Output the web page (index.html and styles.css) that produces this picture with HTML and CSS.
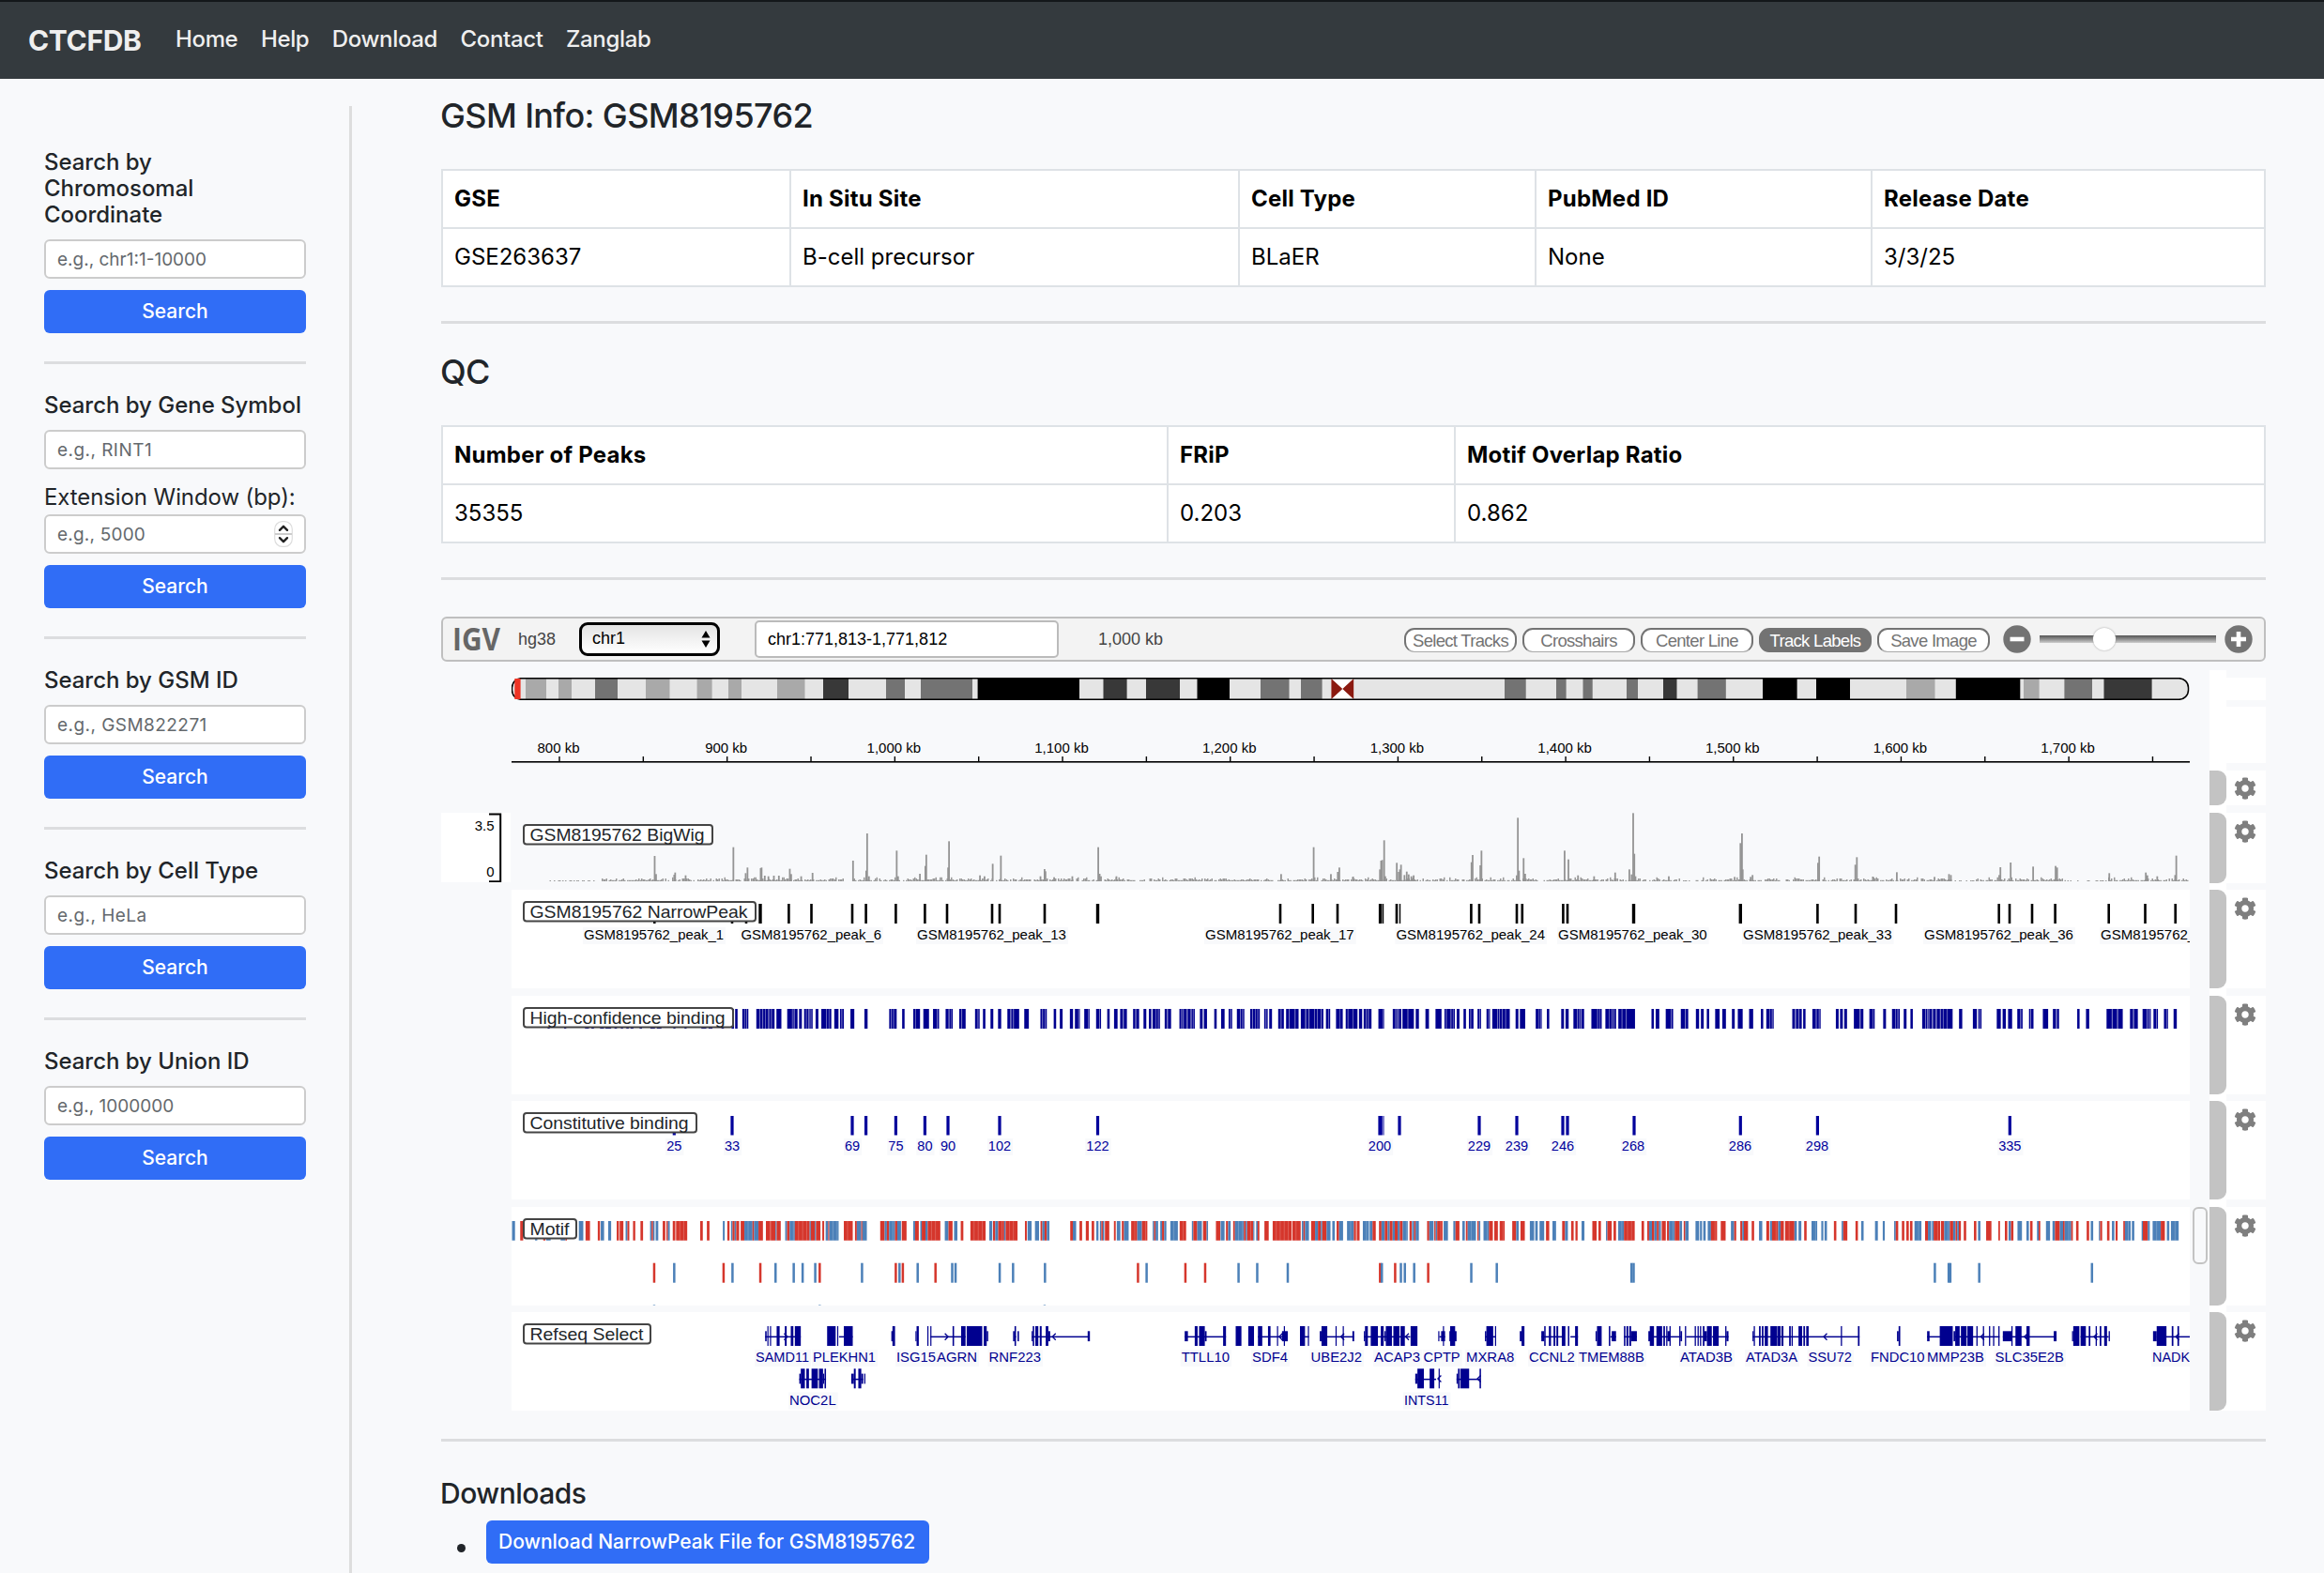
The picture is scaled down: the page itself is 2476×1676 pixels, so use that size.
FILE: index.html
```html
<!DOCTYPE html>
<html lang="en">
<head>
<meta charset="utf-8">
<title>CTCFDB - GSM8195762</title>
<link rel="stylesheet" href="styles.css">
</head>
<body>
<svg class="defs" aria-hidden="true">
  <symbol id="cog" viewBox="0 0 512 512"><path d="M487.4 315.7l-42.6-24.6c4.3-23.2 4.3-47 0-70.2l42.6-24.6c4.9-2.8 7.1-8.6 5.5-14-11.1-35.6-30-67.8-54.7-94.6-3.8-4.1-10-5.1-14.8-2.3L380.8 110c-17.9-15.4-38.5-27.3-60.8-35.1V25.8c0-5.6-3.9-10.5-9.4-11.7-36.7-8.2-74.3-7.8-109.2 0-5.5 1.2-9.4 6.1-9.4 11.7V75c-22.2 7.9-42.8 19.8-60.8 35.1L88.7 85.5c-4.9-2.8-11-1.9-14.8 2.3-24.7 26.7-43.6 58.9-54.7 94.6-1.7 5.4.6 11.2 5.5 14L67.3 221c-4.3 23.2-4.3 47 0 70.2l-42.6 24.6c-4.9 2.8-7.1 8.6-5.5 14 11.1 35.6 30 67.8 54.7 94.6 3.8 4.1 10 5.1 14.8 2.3l42.6-24.6c17.9 15.4 38.5 27.3 60.8 35.1v49.2c0 5.6 3.9 10.5 9.4 11.7 36.7 8.2 74.3 7.8 109.2 0 5.5-1.2 9.4-6.1 9.4-11.7v-49.2c22.2-7.9 42.8-19.8 60.8-35.1l42.6 24.6c4.9 2.8 11 1.9 14.8-2.3 24.7-26.7 43.6-58.9 54.7-94.6 1.5-5.5-.7-11.3-5.6-14.1zM256 336c-44.1 0-80-35.9-80-80s35.9-80 80-80 80 35.9 80 80-35.9 80-80 80z"/></symbol>
</svg>
<nav class="navbar">
  <a class="brand">CTCFDB</a>
  <a>Home</a><a>Help</a><a>Download</a><a>Contact</a><a>Zanglab</a>
</nav>
<div class="page">
  <aside class="sidebar">
    <form>
      <h5>Search by<br>Chromosomal<br>Coordinate</h5>
      <input type="text" class="tight" placeholder="e.g., chr1:1-10000">
      <button type="button" class="btn">Search</button>
    </form>
    <hr>
    <form>
      <h5>Search by Gene Symbol</h5>
      <input type="text" placeholder="e.g., RINT1">
      <label class="ext">Extension Window (bp):</label>
      <div class="number">
        <input type="text" class="snug" placeholder="e.g., 5000">
        <svg class="spinner" viewBox="0 0 20 28"><rect class="case" x=".7" y=".7" width="18.6" height="26.6" rx="8"/><path class="split" d="M1 14H19"/><path class="chev" d="M6 9.8 10 5.8l4 4M6 18.2l4 4 4-4"/></svg>
      </div>
      <button type="button" class="btn">Search</button>
    </form>
    <hr>
    <form>
      <h5>Search by GSM ID</h5>
      <input type="text" placeholder="e.g., GSM822271">
      <button type="button" class="btn">Search</button>
    </form>
    <hr>
    <form>
      <h5>Search by Cell Type</h5>
      <input type="text" placeholder="e.g., HeLa">
      <button type="button" class="btn">Search</button>
    </form>
    <hr>
    <form>
      <h5>Search by Union ID</h5>
      <input type="text" class="tight" placeholder="e.g., 1000000">
      <button type="button" class="btn">Search</button>
    </form>
  </aside>
  <main class="content">
    <h2>GSM Info: GSM8195762</h2>
    <table class="info">
      <colgroup><col class="c1"><col class="c2"><col class="c3"><col class="c4"><col></colgroup>
      <tr><th>GSE</th><th>In Situ Site</th><th>Cell Type</th><th>PubMed ID</th><th>Release Date</th></tr>
      <tr><td>GSE263637</td><td>B-cell precursor</td><td>BLaER</td><td>None</td><td>3/3/25</td></tr>
    </table>
    <hr>
    <h2>QC</h2>
    <table class="qc">
      <colgroup><col class="q1"><col class="q2"><col></colgroup>
      <tr><th>Number of Peaks</th><th>FRiP</th><th>Motif Overlap Ratio</th></tr>
      <tr><td>35355</td><td>0.203</td><td>0.862</td></tr>
    </table>
    <hr>
    <section class="igv">
      <div class="igv-bar">
        <svg class="logo" viewBox="0 0 52 26"><text x="0" y="25" textLength="51" lengthAdjust="spacingAndGlyphs">IGV</text></svg>
        <span class="genome">hg38</span>
        <span class="chrom">chr1<svg viewBox="0 0 10 18"><path d="M5 0 9.5 7.5H.5zM5 18 .5 10.5h9z"/></svg></span>
        <span class="locus">chr1:771,813-1,771,812</span>
        <span class="span">1,000 kb</span>
        <div class="toggles">
          <span>Select Tracks</span><span>Crosshairs</span><span>Center Line</span><span class="on">Track Labels</span><span>Save Image</span>
        </div>
        <svg class="zoom" viewBox="0 0 30 30"><circle cx="15" cy="15" r="14.7"/><path d="M7.5 15h15"/></svg>
        <div class="slider"><i></i></div>
        <svg class="zoom" viewBox="0 0 30 30"><circle cx="15" cy="15" r="14.7"/><path d="M7 15h16M15 7v16"/></svg>
      </div>
      <div class="tracks">
        <div class="row ideo"><div class="axis"></div><svg id="ideogram" class="view clear" viewBox="545 722 1788 24"></svg><div class="handle"></div><div class="gear"></div></div>
        <div class="row ruler"><div class="axis"></div><svg id="ruler" class="view clear" viewBox="545 753 1788 60"></svg><div class="handle"></div><div class="gear"></div></div>
        <div class="row seq"><div class="axis"></div><div class="view clear"></div><div class="handle grip"></div><div class="gear"><svg><use href="#cog"/></svg></div></div>
        <div class="row wig"><div class="axis"><svg class="scale" viewBox="470 866 74 74"><path d="M521 867.5H533.2V939.2H521"/><text x="526.5" y="885">3.5</text><text x="526.5" y="934">0</text></svg></div><svg id="bigwig" class="view clear" viewBox="545 866 1788 75"></svg><div class="handle grip"></div><div class="gear"><svg><use href="#cog"/></svg></div></div>
        <div class="row tall"><div class="axis"></div><svg id="peaks" class="view" viewBox="545 948 1788 105"></svg><div class="handle grip"></div><div class="gear"><svg><use href="#cog"/></svg></div></div>
        <div class="row tall"><div class="axis"></div><svg id="highconf" class="view" viewBox="545 1061 1788 105"></svg><div class="handle grip"></div><div class="gear"><svg><use href="#cog"/></svg></div></div>
        <div class="row tall"><div class="axis"></div><svg id="constit" class="view" viewBox="545 1173 1788 105"></svg><div class="handle grip"></div><div class="gear"><svg><use href="#cog"/></svg></div></div>
        <div class="row tall"><div class="axis"></div><svg id="motif" class="view" viewBox="545 1286 1788 105"></svg><div class="scroll"></div><div class="handle grip"></div><div class="gear"><svg><use href="#cog"/></svg></div></div>
        <div class="row tall"><div class="axis"></div><svg id="refseq" class="view" viewBox="545 1398 1788 105"></svg><div class="handle grip"></div><div class="gear"><svg><use href="#cog"/></svg></div></div>
      </div>
    </section>
    <hr class="last">
    <h4>Downloads</h4>
    <ul><li><a class="btn download">Download NarrowPeak File for GSM8195762</a></li></ul>
  </main>
</div>
<script src="tracks.js"></script>
</body>
</html>
```
FILE: styles.css
```css
* { box-sizing: border-box; }
html, body { margin: 0; height: 1676px; overflow: hidden; }
body { background: #f8f9fb; color: #212529; font: 400 24px/36px Inter, "Liberation Sans", sans-serif; }
.defs { display: none; }

.navbar { height: 84px; background: #343a3e; border-top: 2px solid #13171a; display: flex; align-items: center; padding: 0 0 3px 30px; gap: 24.5px; color: #efefef; font-weight: 500; letter-spacing: -.35px; }
.navbar .brand { font-size: 30px; font-weight: 700; margin-right: 12px; padding-top: 2px; letter-spacing: -0.35px; }

.page { display: flex; height: 1592px; }
.sidebar { width: 328px; margin: 29px 0 0 47px; padding: 46px 46px 0 0; border-right: 3px solid #ddd; }
form { display: flex; flex-direction: column; gap: 12px; }
h5 { margin: 0; font-size: 24px; line-height: 28px; font-weight: 500; white-space: nowrap; letter-spacing: -.03px; }
input { height: 42px; width: 100%; border: 2px solid #ccc; border-radius: 6px; background: #fff; padding: 0 12px; font: 400 19px Inter, sans-serif; letter-spacing: .45px; }
input.snug { letter-spacing: .2px; }
input.tight { letter-spacing: 0; }
input::placeholder { color: #64696d; opacity: 1; }
.ext { height: 36px; margin-bottom: -12px; white-space: nowrap; letter-spacing: -.1px; }
.number { position: relative; height: 42px; }
.spinner { position: absolute; right: 14px; top: 7px; width: 20px; height: 28px; fill: none; }
.spinner .case { fill: #fff; stroke: #ddd; stroke-width: 1.2; }
.spinner .split { stroke: #ccc; stroke-width: 2; }
.spinner .chev { stroke: #222; stroke-width: 2.4; stroke-linecap: round; stroke-linejoin: round; }
.btn { height: 46px; border: 0; border-radius: 6px; background: #306df6; color: #fff; font: 500 21px/46px Inter, sans-serif; padding: 0; }
hr { height: 3px; border: 0; margin: 30px 0; background: #dcdddf; }

.content { width: 1944px; margin-left: 95px; padding-top: 18px; }
h2 { margin: 0 0 0 -1px; font-size: 36px; line-height: 42px; font-weight: 500; letter-spacing: -.62px; }
.content > hr { margin: 36px 0 30px; }
table { width: 100%; margin-top: 36px; border-collapse: collapse; table-layout: fixed; background: #fff; color: #000; }
th, td { height: 62px; border: 2px solid #dee2e6; padding: 0 12px; text-align: left; line-height: 36px; }
th { font-weight: 700; letter-spacing: .22px; }
.c1 { width: 371px; } .c2 { width: 478px; } .c3 { width: 316px; } .c4 { width: 358px; }
.q1 { width: 773px; } .q2 { width: 306px; }

.igv { margin-top: 39px; font-family: "Liberation Sans", Arial, sans-serif; }
.igv-bar { height: 48px; border: 2px solid #bfbfbf; border-radius: 6px; background: #f3f3f3; display: flex; align-items: center; padding: 0 12px; color: #444; font-size: 18px; line-height: 20px; }
.logo { width: 52px; height: 26px; margin-left: -2px; }
.logo text { font: 700 34px "Open Sans", sans-serif; fill: #666; }
.genome { width: 41px; margin-left: 18px; }
.chrom { display: flex; justify-content: space-between; align-items: center; width: 150px; height: 36px; margin-left: 24px; border: 3px solid #000; border-radius: 9px; padding: 0 7px 2px 11px; color: #000; background: linear-gradient(#e4e4e4, #fff); }
.chrom svg { width: 10px; height: 18px; margin-top: 2px; }
.locus { width: 324px; height: 40px; margin-left: 37px; border: 2px solid #bbb; border-radius: 5px; background: #fff; color: #000; line-height: 37px; padding-left: 12px; }
.span { width: 80px; margin-left: 42px; }
.toggles { display: flex; gap: 6px; margin-left: auto; padding-top: 1px; }
.toggles span { width: 120px; height: 26px; border: 2px solid #737373; border-bottom: 1px solid #aaa; border-radius: 11px; background: #fff; color: #737373; text-align: center; font-size: 18.5px; line-height: 24px; letter-spacing: -.7px; white-space: nowrap; }
.toggles .on { background: #737373; color: #fff; border-color: #737373; }
.zoom { width: 30px; height: 30px; fill: #737373; }
.zoom path { stroke: #fff; stroke-width: 4.6; }
.toggles + .zoom { margin-left: 14px; }
.slider { width: 188px; height: 8px; margin: 0 9px; background: linear-gradient(#555, #888 45%, #ccc); position: relative; }
.slider i { position: absolute; left: 57px; top: -8px; width: 24px; height: 24px; border-radius: 50%; background: #fff; box-shadow: 0 0 2px #999; }

.tracks { display: flex; flex-direction: column; margin-top: 9px; padding-top: 8px; background: linear-gradient(#fff, #fff) 1884px 0 / 18px 100% no-repeat; }
.row { display: grid; grid-template-columns: 75px 1788px 21px 18px 42px; position: relative; }
.row > .view { grid-column: 2; width: 1788px; height: 100%; background: #fff; }
.row > .clear { background: none; }
.row > .handle { grid-column: 4; }
.row > .grip { background: #c3c3c3; border-radius: 0 9px 9px 0; }
.row > .gear { grid-column: 5; background: #fff; padding: 7px 7px 0 8px; }
.gear svg { display: block; width: 24px; height: 24px; fill: #7f7f7f; }
.ideo { height: 24px; margin-bottom: 7px; }
.ruler { height: 60px; margin-bottom: 8px; }
.seq { height: 37px; margin-bottom: 8px; }
.wig { height: 75px; margin-bottom: 7px; }
.tall { height: 105px; margin-bottom: 8px; }
.tall:nth-child(6), .tall:nth-child(8) { margin-bottom: 7px; }
.tall:last-child { margin-bottom: 0; }
.wig .gear, .tall .gear { padding-top: 8px; }
.scale { display: block; width: 74px; height: 74px; background: #fff; }
.scale path { fill: none; stroke: #000; stroke-width: 2; }
.scale text { font-size: 15px; text-anchor: end; }
.scroll { grid-column: 3; width: 16px; height: 61px; margin-left: 3px; border: 2px solid #c3c3c3; border-radius: 6px; }
.view text { font-size: 15px; }
.view .name { font-size: 18.5px; fill: #212529; }

.content > .last { margin: 30px 0; }
h4 { margin: 0 0 0 -1px; font-size: 30px; line-height: 36px; font-weight: 500; padding-top: 7px; letter-spacing: -.5px; }
ul { margin: 11px 0 0; padding-left: 48px; }
li { height: 46px; position: relative; list-style: none; }
li::before { content: ""; position: absolute; left: -31px; top: 25px; width: 9px; height: 9px; border-radius: 50%; background: #212529; }
.download { display: inline-block; width: 472px; padding-left: 13px; white-space: nowrap; }
```
FILE: tracks.js
```js
const NS = 'http://www.w3.org/2000/svg';
const el = id => document.getElementById(id);
function add(svg, tag, attrs, text) {
  const e = document.createElementNS(NS, tag);
  for (const k in attrs) e.setAttribute(k, attrs[k]);
  if (text) e.textContent = text;
  svg.appendChild(e);
}
const rect = (svg, x, y, w, h, fill) => add(svg, 'rect', {x, y, width: w, height: h, fill});
const parse = s => s.trim().split(/\s+/);

/* Each panel holds positions in its own units: [origin, scale]. */
const P1 = [540, 0.38265], P2 = [1140, 0.38265], P3 = [1740, 0.44643];
const M1 = [540, 0.3954], M2 = [1160, 0.38265], M3 = [1760, 0.43367];
const at = (p, v) => p[0] + v * p[1];

function name(svg, y, right, text, len) {
  add(svg, 'rect', {x: 558, y: y + 1, width: right - 559, height: 20.5, rx: 3, fill: '#fff', stroke: '#444', 'stroke-width': 2});
  add(svg, 'text', {class: 'name', x: 564.5, y: y + 18, textLength: len, lengthAdjust: 'spacingAndGlyphs'}, text);
}
function label(svg, x0, x1, y, text, fill) {
  rect(svg, x0 - 1, y - 13, x1 - x0 + 3, 18, '#f8f9fb');
  add(svg, 'text', {x: x0, y, textLength: x1 - x0, lengthAdjust: 'spacingAndGlyphs', fill}, text);
}

/* Ideogram */
{
  const s = el('ideogram');
  add(s, 'clipPath', {id: 'chrClip'});
  add(s.lastChild, 'rect', {x: 545.5, y: 722.5, width: 1786, height: 23, rx: 10});
  const g = document.createElementNS(NS, 'g');
  g.setAttribute('clip-path', 'url(#chrClip)');
  s.appendChild(g);
  rect(g, 545, 722, 1788, 24, '#e5e5e5');
  const bands = {
    '#a9a9a9': [[560,582],[595,609],[688,713.5],[742.6,758.6],[776,790],[828,857.5],[2031,2061.5],[2156,2172.6]],
    '#737373': [[634,658],[944,964],[981,1036],[1343,1373.5],[1386,1408.6],[1603,1625.7],[1658,1668.6],[1686.5,1696.7],[1733,1745],[1808.6,1838.8],[2199.4,2229]],
    '#383838': [[877,904],[1175.5,1200.6],[1221,1257],[1772,1786.5],[2241.5,2292.6]],
    '#000': [[1041.6,1150],[1275.5,1310],[1878,1914.6],[1935,1971],[2083.8,2152.3]]
  };
  for (const c in bands) for (const [a, b] of bands[c]) rect(g, a, 722, b - a, 24, c);
  rect(g, 1418.4, 722, 23.8, 24, '#fff');
  add(g, 'path', {d: 'M1418.4 723L1430.3 734L1418.4 745zM1442.2 723L1430.3 734L1442.2 745z', fill: '#8b1a10'});
  add(s, 'rect', {x: 545.5, y: 722.7, width: 1786, height: 22.6, rx: 10, fill: 'none', stroke: '#000', 'stroke-width': 1.5});
  rect(s, 548.3, 723, 6.3, 22, '#ee3324');
}

/* Ruler */
{
  const s = el('ruler');
  rect(s, 545, 811, 1788, 1.6, '#000');
  for (let kb = 800; kb < 1760; kb += 50) {
    const x = 596 + (kb - 800) * 1.7868;
    rect(s, x - .7, 806, 1.4, 5, '#000');
    if (kb % 100 === 0) {
      const t = kb >= 1000 ? '1,' + String(kb % 1000).padStart(3, '0') : kb;
      add(s, 'text', {x: x - 1, y: 802, 'text-anchor': 'middle'}, t + ' kb');
    }
  }
}

/* BigWig signal */
{
  const s = el('bigwig'), base = 939, c = '#999';
  const W1 = [460, .4847], W2 = [1220, .40816], W3 = [1840, .40561];
  let seed = 7;
  const rnd = () => (seed = (seed * 16807) % 2147483647) / 2147483647;
  for (let x = 584; x < 2332; x += 1.5) {
    const gap = (x > 2078 && x < 2104) || (x > 2200 && x < 2245) || (x > 1792 && x < 1806) || x < 640;
    const r = rnd();
    if (r < (gap ? .65 : .17)) continue;
    const h = gap ? 1 : r > .95 ? 4.2 : r > .8 ? 3 : r > .55 ? 2 : 1.2;
    rect(s, x, base - h, 1.5, h, c);
  }
  const sets = [
    [W1, '490:815 493:873 533:875 535:868 558:877 663:787 690:870 694:852 723:854 725:852 732:878 740:880 752:878 763:878 787:856 790:873 812:880 837:869 926:830 955:862 957:743 961:880 1022:798 1025:880 1073:872 1085:847 1087:811 1135:852 1137:768 1205:877 1215:880 1233:840 1251:814 1338:880 1347:857 1349:864 1368:883 1408:880 1465:787 1468:872 1471:880 1505:880'],
    [W2, '355:873 440:787 485:873 503:866 507:852 543:881 613:858 616:830 619:828 624:765 627:880 657:837 662:866 665:858 668:843 677:876 683:865 688:874 695:880 701:877 852:835 855:812 875:845 878:798 970:877 973:693 976:862 988:822 992:872 1095:798 1105:826 1130:877 1172:880 1227:868 1264:858 1270:874 1274:678 1277:808 1280:880 1367:880 1554:774 1558:743 1560:858'],
    [W3, '20:882 67:876 62:882 239:837 242:817 337:843 341:819 383:881 446:867 545:882 583:873 588:876 715:876 718:851 745:836 804:849 863:847 867:852 1004:870 1100:868 1104:877 1130:880 1177:876 1180:814']
  ];
  for (const [p, d] of sets) for (const t of parse(d)) {
    const [x, y] = t.split(':').map(Number), h = (896 - y) / 3;
    rect(s, at(p, x) - .9, base - h, 1.8, h, '#949494');
  }
  name(s, 878, 760, 'GSM8195762 BigWig', 186);
}

/* NarrowPeak */
{
  const s = el('peaks');
  for (const x of parse('697.3 780 795 810 840.4 864.5 908 922.6 954.4 985.4 1009 1057 1065 1113 1169.5 1364 1398.7 1425 1470.6 1473.5 1488 1491.5 1567.4 1576 1616 1621.8 1665.4 1670 1740.5 1854.3 1936.4 1977 2020 2129.7 2141 2165 2189.6 2246.7 2285.5 2317.7').map(Number)) {
    const wide = [810, 1169.5, 1470.6, 1740.5, 1854.3].includes(x);
    const w = wide ? 3.4 : x === 1473.5 || x === 1491.5 ? 1.4 : 2.6;
    rect(s, x - w / 2, 963, w, 21, '#000');
  }
  for (const [a, b, n] of [[622,771,1],[789.5,939,6],[977,1136,13],[1284,1442.7,17],[1487.4,1646,24],[1660,1818.6,30],[1857,2015.5,33],[2050,2209,36],[2238,2397,38]])
    label(s, a, b, 1001, 'GSM8195762_peak_' + n, '#000');
  name(s, 960, 806, 'GSM8195762 NarrowPeak', 232);
}

/* High-confidence binding */
{
  const s = el('highconf');
  const sets = [
    [P1, '114-119 160-165 218-228 236-242 260-270 275-290 300-306 318-323 333-339 345-352 370-376 400-412 418-430 464-469 495-500 542-555 562-572 598-604 626-632 636-642 656-661 663-667 669-672 695-704 706-712 714-719 721-728 731-736 738-745 751-764 781-794 796-799 802-809 814-821 828-833 835-840 843-846 848-851 860-867 876-889 891-896 898-903 912-923 928-932 934-938 957-967 996-1004 1065-1070 1072-1076 1078-1085 1101-1107 1132-1137 1139-1150 1160-1175 1187-1198 1200-1203 1222-1230 1233-1236 1238-1241 1260-1266 1268-1277 1304-1311 1313-1316 1326-1332 1347-1354 1368-1376 1394-1402 1405-1410 1412-1426 1441-1453 1486-1491 1493-1498 1500-1503 1523-1529 1540-1547'],
    [P2, '0-8 14-23 25-27 40-50 52-54 73-82 84-86 104-110 123-132 140-147 150-158 176-182 185-192 205-212 220-226 230-238 240-245 247-250 264-270 273-281 305-310 312-315 317-325 328-336 339-342 344-347 362-369 373-381 402-408 421-430 442-446 448-451 465-474 476-480 482-485 502-508 510-515 517-522 524-528 541-545 547-550 555-562 580-587 589-595 602-609 612-626 628-636 643-655 658-664 667-680 682-688 690-699 701-705 713-719 721-724 741-750 752-759 768-773 775-787 789-800 805-813 818-824 826-830 832-839 859-870 872-874 899-906 908-911 913-914 916-922 926-940 942-957 963-971 990-999 1018-1034 1043-1047 1049-1060 1062-1066 1068-1071 1077-1084 1096-1102 1111-1115 1117-1123 1135-1140 1142-1144 1160-1165 1167-1169 1176-1190 1192-1195 1197-1202 1205-1212 1214-1224 1241-1248 1253-1267 1297-1304 1306-1309 1311-1313 1328-1334 1368-1375 1380-1388 1402-1412 1414-1418 1420-1422 1425-1431 1452-1468 1470-1474 1476-1480 1491-1500 1502-1508 1511-1514 1516-1520 1527-1536 1538-1548 1550-1568'],
    [P3, '0-4 44-49 54-62 78-90 92-95 114-124 126-131 150-157 162-168 176-181 196-206 213-221 236-242 250-261 277-286 305-310 318-325 327-331 333-335 380-386 389-394 397-402 406-411 428-436 438-443 445-447 484-490 494-500 504-510 527-540 543-549 564-571 573-576 597-603 618-625 627-631 633-636 646-652 662-667 690-697 699-702 704-705 707-713 716-722 725-732 735-739 741-748 750-762 778-785 811-820 824-827 829-831 868-877 882-889 895-904 917-924 926-929 945-948 950-955 978-990 1002-1009 1012-1016 1060-1065 1081-1088 1130-1142 1145-1155 1158-1168 1186-1193 1196-1204 1216-1226 1228-1231 1233-1235 1242-1248 1250-1252 1267-1272 1274-1276 1290-1297']
  ];
  for (const [p, d] of sets) {
    let last = -9;
    for (const t of parse(d)) {
      const [a, b] = t.split('-').map(Number);
      if (a - last <= 3) rect(s, at(p, last), 1075, (a - last) * p[1], 21, '#7474c0');
      rect(s, at(p, a) - .15, 1075, (b - a) * p[1] + .3, 21, '#00008f');
      last = b;
    }
  }
  name(s, 1073, 782, 'High-confidence binding', 208);
}

/* Constitutive binding */
{
  const s = el('constit'), c = '#00009b';
  for (const x of parse('718.3 780 908 922.6 954.4 985.4 1010 1065 1169.5 1470.6 1474 1491 1576 1616 1665 1670 1741 1854.3 1936.4 2141.3').map(Number)) {
    const w = x === 1474 ? 1 : x === 1470.6 ? 4.4 : 3.2;
    rect(s, x - w / 2, 1189, w, 20.5, c);
  }
  for (const [x, t] of [[718.3,25],[780,33],[908,69],[954.4,75],[985.4,80],[1010,90],[1065,102],[1169.5,122],[1470,200],[1576,229],[1616,239],[1665,246],[1740,268],[1854,286],[1936,298],[2141.3,335]]) {
    const w = String(t).length * 8.1;
    label(s, x - w / 2, x + w / 2, 1226, String(t), c);
  }
  name(s, 1185, 743, 'Constitutive binding', 169);
}

/* Motif */
{
  const s = el('motif'), col = {r: '#d5362c', b: '#4c80b8'};
  const sets = [
    [M1, 'b14-22 r36-44 b76-82 r98-104 b106-118 b145-158 r158-162 b194-206 r212-224 r245-251 b253-262 b273-281 r296-302 r304-314 b320-325 r325-330 r340-346 r360-367 b386-390 r390-394 b394-398 b401-408 r420-427 r430-434 b434-439 r447-454 r456-486 r521-528 r539-546 b582-587 r594-600 b604-608 r608-614 b614-618 r618-626 r630-640 b640-662 r662-666 b666-678 r678-690 r698-710 r711-724 b724-727 r727-738 b750-755 r755-762 b762-776 r776-816 b816-819 r819-830 b830-833 r833-845 r850-855 b859-866 r866-869 b869-894 r908-932 r938-943 b943-955 r955-958 b958-970 r1006-1018 b1018-1024 r1024-1030 b1030-1046 r1046-1052 b1052-1062 r1064-1077 b1095-1100 r1100-1110 b1114-1118 r1118-1128 b1128-1134 r1134-1168 b1180-1190 r1190-1201 b1205-1214 r1223-1230 r1249-1290 b1300-1308 r1310-1316 b1316-1324 r1324-1340 b1340-1344 r1344-1376 r1396-1401 b1403-1414 b1423-1434 r1438-1443 b1443-1449 r1449-1455 b1455-1462 r1518-1525 b1525-1534 r1543-1550 r1560-1568'],
    [M2, 'r8-15 b21-27 b31-35 r35-39 b39-43 r45-57 r70-75 b78-88 r92-98 b98-111 r118-135 b135-148 r148-163 b178-182 r182-186 b186-193 b199-204 r204-210 b210-216 b227-248 r253-271 b287-291 r291-302 b302-315 r318-328 b328-332 r354-366 b367-378 r382-388 b388-395 r402-407 b407-432 r432-437 b437-441 r441-458 b458-461 b466-472 r470-475 r489-501 r512-565 r567-590 b593-598 r598-602 b602-613 r619-630 b630-638 r638-646 b646-650 r650-662 b662-673 b678-685 r690-697 b697-708 b719-738 r738-744 r746-754 b763-780 b782-790 r790-799 r808-815 b815-824 r824-832 b832-838 r838-846 b846-852 r852-860 b860-866 r866-874 b874-888 r893-899 b900-906 r906-910 b910-919 r942-948 b948-960 r962-966 b966-970 r970-985 b988-1000 b1015-1021 r1021-1032 b1040-1047 r1050-1055 b1055-1078 r1082-1086 b1086-1090 b1099-1114 r1114-1125 r1129-1139 r1144-1158 r1179-1190 b1190-1197 r1202-1214 b1228-1240 b1243-1250 b1255-1268 r1273-1282 b1291-1301 r1318-1326 b1326-1334 r1343-1350 r1355-1361 b1372-1380 r1402-1414 r1419-1426 b1440-1444 r1444-1456 r1461-1468 b1474-1490 r1490-1520 r1539-1546 r1555-1560 b1560-1568'],
    [M3, 'r0-6 b6-12 r12-17 b17-22 r24-34 r37-42 b42-56 r56-68 b68-74 r78-82 b82-90 b107-116 b118-123 b126-132 b137-145 r145-160 r169-181 b194-202 r202-207 r217-222 b222-226 r226-236 r245-251 b263-271 r281-288 b290-295 r295-310 b310-316 r316-324 r327-350 b350-356 b360-367 r374-380 b392-406 b416-421 b424-430 r447-453 b466-470 r470-480 r500-506 b514-520 b548-555 b567-572 b595-599 r599-605 r614-620 r625-631 r634-640 b645-662 r671-678 b678-686 b688-692 r692-708 r710-718 b718-732 r732-740 b740-746 r746-750 b750-754 r754-759 r766-772 r791-797 b801-807 r821-834 r851-855 r867-873 b876-882 r882-888 b898-909 b920-926 r929-935 b946-950 r950-954 b968-978 b984-990 r990-1002 b1002-1010 r1010-1014 b1014-1030 r1030-1034 r1042-1048 r1068-1074 b1078-1084 b1098-1101 r1101-1106 r1118-1124 b1130-1136 r1139-1144 r1158-1162 b1162-1170 b1170-1176 b1179-1185 b1203-1206 r1206-1218 b1218-1223 b1230-1250 r1250-1260 b1265-1271 b1275-1294']
  ];
  for (const [p, d] of sets) for (const t of parse(d)) {
    const [a, b] = t.slice(1).split('-').map(Number);
    rect(s, at(p, a), 1301, (b - a) * p[1], 20.7, col[t[0]]);
    for (let v = a + 9; v < b - 4; v += 11) add(s, 'rect', {x: at(p, v), y: 1301, width: .8, height: 20.7, fill: '#fff', opacity: .25});
  }
  const second = [
    [M1, 'r397 b451 r584 b608 r683 b724 b773 b797 b831 r843 b957 r1048 b1058 r1067 b1107 r1155 b1200 b1209 b1328 b1364 b1450'],
    [M2, 'r137 b161 r269 r324 b417 b469 b554 r811 b816 r853 b869 b880 b906 r945 b1065 b1136 b1511 b1517'],
    [M3, 'b695 b729 b733 b804 b1081']
  ];
  for (const [p, d] of second) for (const t of parse(d)) rect(s, at(p, +t.slice(1)) - 1.25, 1345.7, 2.5, 21, col[t[0]]);
  for (const x of [397, 843, 1449]) rect(s, at(M1, x) - 1.2, 1390, 2.4, 1, '#9bb9d8');
  name(s, 1298, 615, 'Motif', 42);
}

/* RefSeq genes: l = intron line, t = coding exon, s = UTR, < > = strand arrow; capitals are the second row */
{
  const s = el('refseq'), c = '#00008f';
  const sets = [
    [M1, 'l696-792 s696-700 t702-705 t709-712 t727-735 t749-754 t765-772 t776-792 >756 t863-886 t890-892 l895-932 t908-932 s1036-1040 t1039-1046 s1101-1104 t1104-1110 t1133-1136 t1141-1144 l1141-1236 >1189 t1201-1205 t1224-1236 t1239-1281 t1285-1293 s1293-1297 s1364-1368 t1368-1372 l1368-1372 s1376-1380 l1414-1568 s1414-1417 t1417-1421 t1424-1432 t1436-1441 t1452-1459 s1459-1464 <1470 s1565-1568 L788-860 S788-792 T792-803 T807-814 T821-838 T841-852 S852-855 T856-860 L928-960 S928-935 T935-940 T947-955 S955-960 S963-966'],
    [M2, 's0-2 l267-382 s267-276 t295-303 t307-323 s323-328 t374-382 t409-425 t444-460 l471-554 t471-483 t499-506 t524-527 t543-546 s538-554 <530 l588-613 t588-602 t610-613 l643-738 s643-648 t648-664 t687-690 t707-710 <702 s734-739 l766-895 s766-769 t769-777 t785-805 t813-821 s823-827 t827-844 t848-865 t868-880 <882 t896-915 s973-976 l976-992 s981-992 t986-989 t1006-1020 s1004-1024 l1103-1134 s1103-1107 t1107-1126 t1131-1134 s1200-1206 t1205-1213 l1260-1325 s1260-1268 t1268-1272 t1281-1287 t1294-1299 t1302-1307 t1317-1327 t1334-1338 l1341-1362 t1354-1362 s1411-1415 t1415-1428 t1448-1452 l1452-1468 s1456-1468 t1490-1494 t1497-1502 t1505-1510 l1490-1526 s1510-1526 s1558-1568 t1562-1568 L909-967 S909-915 T915-933 T949-962 <-972 T974-977 L1024-1090 S1024-1028 T1028-1033 T1035-1059 <-1082 T1088-1092'],
    [M3, 'l0-73 t0-5 t11-25 t28-32 t35-38 s38-44 t43-46 t67-70 s70-74 t81-84 l84-135 t105-108 t112-115 t118-121 t125-129 s129-135 t135-147 t150-164 l147-188 t180-183 s183-188 l247-510 s247-250 t250-253 t263-267 t270-274 t277-285 t291-308 t309-316 t318-323 t337-341 t343-346 t360-369 t372-376 t379-385 <422 t464-467 t506-510 s602-606 t606-610 l676-708 s676-682 t707-739 s741-745 t745-756 t759-773 t775-789 l745-854 t797-800 <808 t813-816 t828-831 t838-841 t851-854 s862-885 t883-886 l862-993 t893-908 <915 t920-928 s987-994 s1032-1035 t1035-1050 l1053-1122 t1053-1066 t1073-1077 <1086 t1090-1093 t1100-1104 t1111-1118 s1122-1125 s1231-1240 t1240-1264 l1240-1325 t1277-1281 <1287 t1291-1295']
  ];
  for (const [p, d] of sets) for (const t of parse(d)) {
    const k = t[0];
    if (k === '<' || k === '>') {
      const low = t[1] === '-', x = at(p, +t.slice(low ? 2 : 1)), y = low ? 1469 : 1424.3, dx = k === '<' ? 3.5 : -3.5;
      add(s, 'path', {d: `M${x + dx} ${y - 3.5}L${x} ${y}L${x + dx} ${y + 3.5}`, fill: 'none', stroke: c, 'stroke-width': 1.3});
      continue;
    }
    const [a, b] = t.slice(1).split('-').map(Number), dy = k < 'a' ? 45.3 : 0;
    const [y, h] = {l: [1423.6, 1.5], t: [1413, 21], s: [1418.3, 10.8]}[k.toLowerCase()];
    rect(s, at(p, a), y + dy, Math.max((b - a) * p[1], 1.2), h, c);
  }
  for (const [t, a, b, y] of [['SAMD11',805,862],['PLEKHN1',866,933],['ISG15',955,997],['AGRN',998,1041],['RNF223',1053.6,1109],['NOC2L',841,890.7,1],['TTLL10',1258.7,1310],['SDF4',1334,1372],['UBE2J2',1396.5,1451],['ACAP3',1464,1513],['CPTP',1516.6,1555.6],['MXRA8',1562,1613.4],['CCNL2',1629,1677.7],['TMEM88B',1682,1752],['INTS11',1496,1543.4,1],['ATAD3B',1790,1846],['ATAD3A',1860,1915],['SSU72',1926.5,1973],['FNDC10',1993,2050.6],['MMP23B',2053,2114],['SLC35E2B',2125.6,2199],['NADK',2293,2333]])
    label(s, a, b, y ? 1496.5 : 1451, t, c);
  name(s, 1410, 694, 'Refseq Select', 121);
}
```
